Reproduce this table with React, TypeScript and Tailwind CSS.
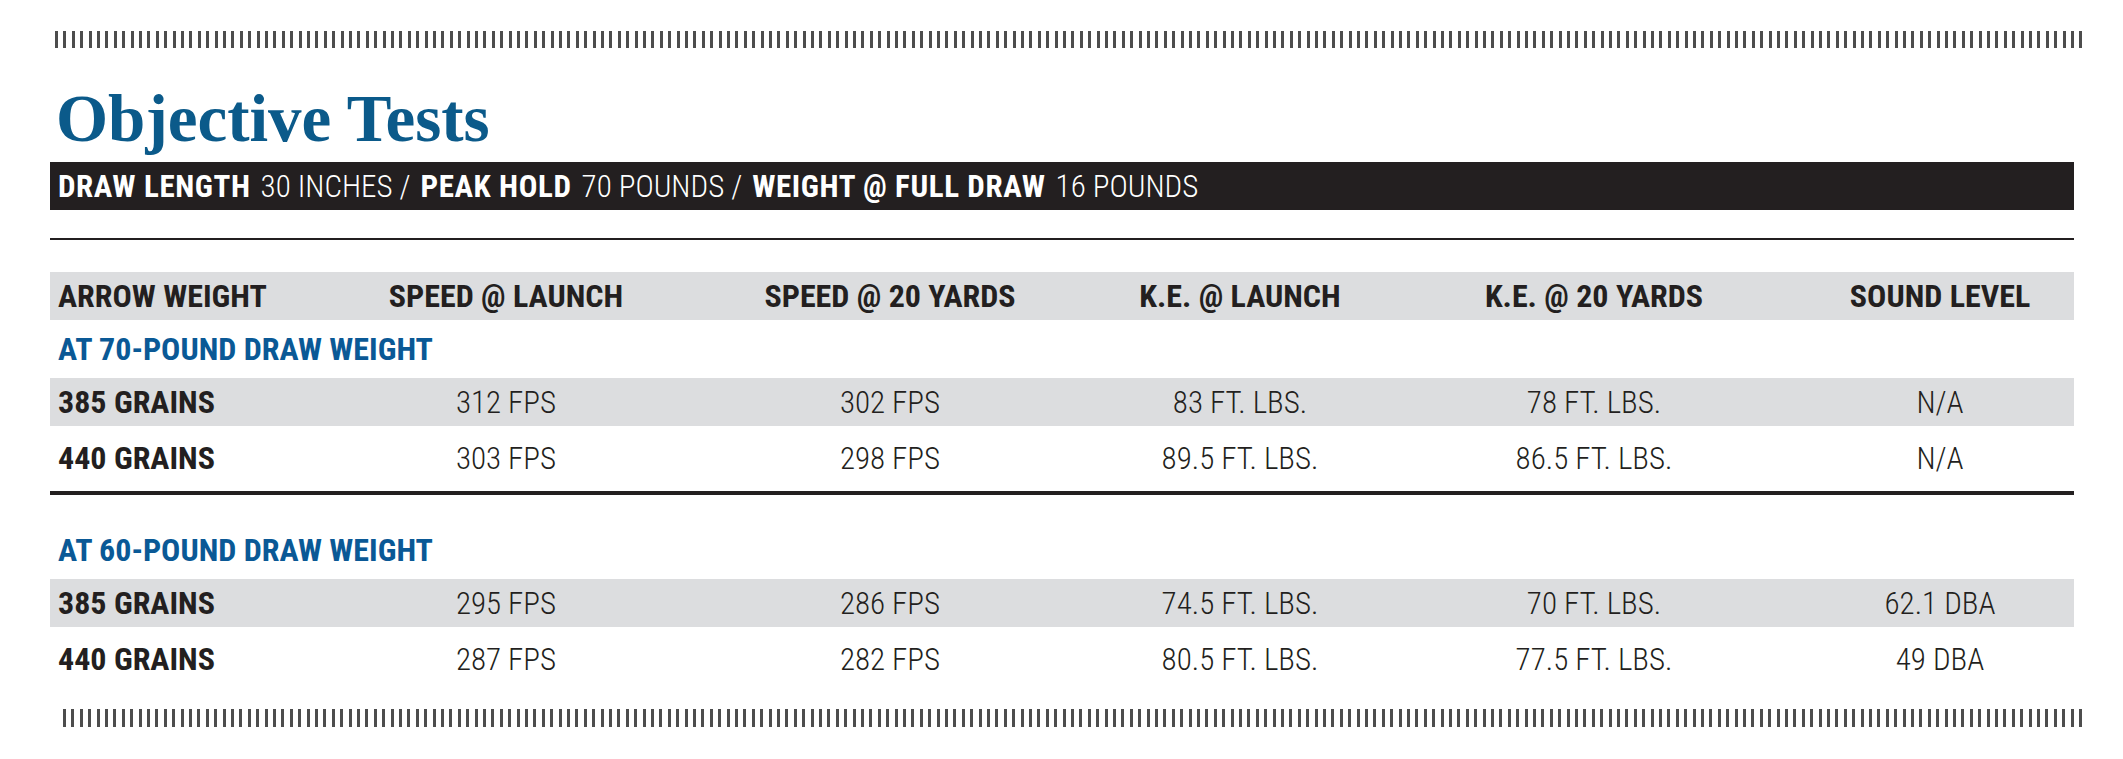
const COLS = "grid grid-cols-[280px_352px_416px_284px_424px_268px] items-center";

const HEADERS = ["SPEED @ LAUNCH", "SPEED @ 20 YARDS", "K.E. @ LAUNCH", "K.E. @ 20 YARDS", "SOUND LEVEL"];

const GROUPS = [
  {
    label: "AT 70-POUND DRAW WEIGHT",
    rows: [
      ["385 GRAINS", "312 FPS", "302 FPS", "83 FT. LBS.", "78 FT. LBS.", "N/A"],
      ["440 GRAINS", "303 FPS", "298 FPS", "89.5 FT. LBS.", "86.5 FT. LBS.", "N/A"],
    ],
  },
  {
    label: "AT 60-POUND DRAW WEIGHT",
    rows: [
      ["385 GRAINS", "295 FPS", "286 FPS", "74.5 FT. LBS.", "70 FT. LBS.", "62.1 DBA"],
      ["440 GRAINS", "287 FPS", "282 FPS", "80.5 FT. LBS.", "77.5 FT. LBS.", "49 DBA"],
    ],
  },
];

function Ticks({ className }: { className: string }) {
  return (
    <div
      className={
        "h-[17px] bg-[repeating-linear-gradient(90deg,#4d4d4d_0px,#4d4d4d_3px,transparent_3px,transparent_8.4px)] " +
        className
      }
    />
  );
}

function DataRow({ cells, shaded }: { cells: string[]; shaded?: boolean }) {
  return (
    <div className={`${COLS} h-[48px] ${shaded ? "bg-[#dcdddf]" : ""}`}>
      <span className="pl-[8px] text-[32px] font-bold leading-none">{cells[0]}</span>
      {cells.slice(1).map((c, i) => (
        <span key={i} className="text-center text-[31px] font-light leading-none">
          {c}
        </span>
      ))}
    </div>
  );
}

function Group({ label, rows, first }: { label: string; rows: string[][]; first?: boolean }) {
  return (
    <div className={first ? "" : "mt-[26px]"}>
      <div className="flex h-[58px] items-center pl-[8px] text-[32px] font-bold leading-none text-[#0a5996]">
        {label}
      </div>
      <DataRow cells={rows[0]} shaded />
      <div className="mt-[8px]">
        <DataRow cells={rows[1]} />
      </div>
    </div>
  );
}

export default function App() {
  return (
    <div className="h-[759px] w-[2123px] overflow-hidden bg-white pt-[31px] text-[#231f20] [font-family:'Roboto_Condensed',Roboto,sans-serif]">
      <Ticks className="ml-[55px] w-[2028px]" />

      <div className="ml-[50px] w-[2024px]">
        <h1 className="ml-[6px] mt-[37px] h-[66px] text-[67px] font-bold leading-[66px] text-[#0b5a8a] [font-family:'Liberation_Serif',serif]">
          Objective Tests
        </h1>

        <div className="mt-[11px] flex h-[48px] items-center bg-[#231f20] pl-[8px] text-[31px] leading-none text-white">
          <span className="font-bold tracking-[0.6px]">DRAW LENGTH</span>
          <span className="ml-[10px] font-light">30 INCHES /</span>
          <span className="ml-[10px] font-bold tracking-[0.6px]">PEAK HOLD</span>
          <span className="ml-[10px] font-light">70 POUNDS /</span>
          <span className="ml-[10px] font-bold tracking-[0.6px]">WEIGHT @ FULL DRAW</span>
          <span className="ml-[10px] font-light">16 POUNDS</span>
        </div>

        <div className="mt-[28px] h-[2px] bg-[#231f20]" />

        <div className={`${COLS} mt-[32px] h-[48px] bg-[#dcdddf] text-[32px] font-bold leading-none`}>
          <span className="pl-[8px]">ARROW WEIGHT</span>
          {HEADERS.map((h) => (
            <span key={h} className="text-center">
              {h}
            </span>
          ))}
        </div>

        <Group label={GROUPS[0].label} rows={GROUPS[0].rows} first />

        <div className="mt-[9px] h-[4px] bg-[#231f20]" />

        <Group label={GROUPS[1].label} rows={GROUPS[1].rows} />

        <Ticks className="ml-[13px] mt-[26px] h-[18px] w-[2020px]" />
      </div>
    </div>
  );
}
